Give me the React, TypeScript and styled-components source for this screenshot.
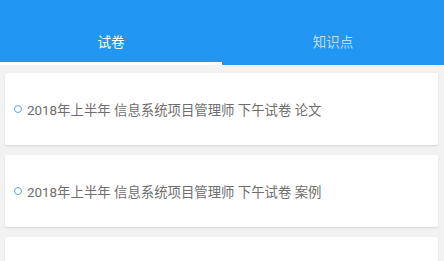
import React, { useState } from 'react';
import styled, { createGlobalStyle } from 'styled-components';

const GlobalStyle = createGlobalStyle`
  html, body {
    margin: 0;
    padding: 0;
    background: #f2f2f2;
    font-family: Roboto, "Noto Sans CJK SC", sans-serif;
  }
`;

const Page = styled.div`
  width: 444px;
  height: 261px;
  overflow: hidden;
  background: #f2f2f2;
`;

const Header = styled.div`
  background: #2196f3;
  height: 65px;
  display: flex;
  align-items: flex-end;
`;

const Tab = styled.div<{ active: boolean }>`
  flex: 1;
  height: 44px;
  display: flex;
  align-items: flex-end;
  justify-content: center;
  padding-bottom: 11px;
  box-sizing: border-box;
  color: ${props => props.active ? '#ffffff' : 'rgba(255, 255, 255, 0.7)'};
  font-size: 13.5px;
  line-height: 18px;
  border-bottom: 3px solid ${props => props.active ? '#ffffff' : 'transparent'};
  cursor: pointer;
`;

const List = styled.div`
  display: flex;
  flex-direction: column;
  gap: 10px;
  padding: 8px 6px 0 5px;
`;

const Card = styled.div`
  background: #ffffff;
  height: 72px;
  border-radius: 2px;
  box-shadow: 0 1px 2px rgba(0, 0, 0, 0.12);
  display: flex;
  align-items: center;
  padding-left: 9px;
`;

const Dot = styled.span`
  width: 6px;
  height: 6px;
  border: 1px solid #5aa9e6;
  border-radius: 50%;
  margin-right: 5px;
  flex-shrink: 0;
`;

const Title = styled.span`
  color: #6e6e6e;
  font-size: 13.4px;
`;

const papers = [
  '2018年上半年 信息系统项目管理师 下午试卷 论文',
  '2018年上半年 信息系统项目管理师 下午试卷 案例',
  '',
];

const App: React.FC = () => {
  const [tab, setTab] = useState(0);

  return (
    <Page>
      <GlobalStyle />
      <Header>
        <Tab active={tab === 0} onClick={() => setTab(0)}>试卷</Tab>
        <Tab active={tab === 1} onClick={() => setTab(1)}>知识点</Tab>
      </Header>
      <List>
        {papers.map((p, i) => (
          <Card key={i}>
            {p && (
              <>
                <Dot />
                <Title>{p}</Title>
              </>
            )}
          </Card>
        ))}
      </List>
    </Page>
  );
};

export default App;
